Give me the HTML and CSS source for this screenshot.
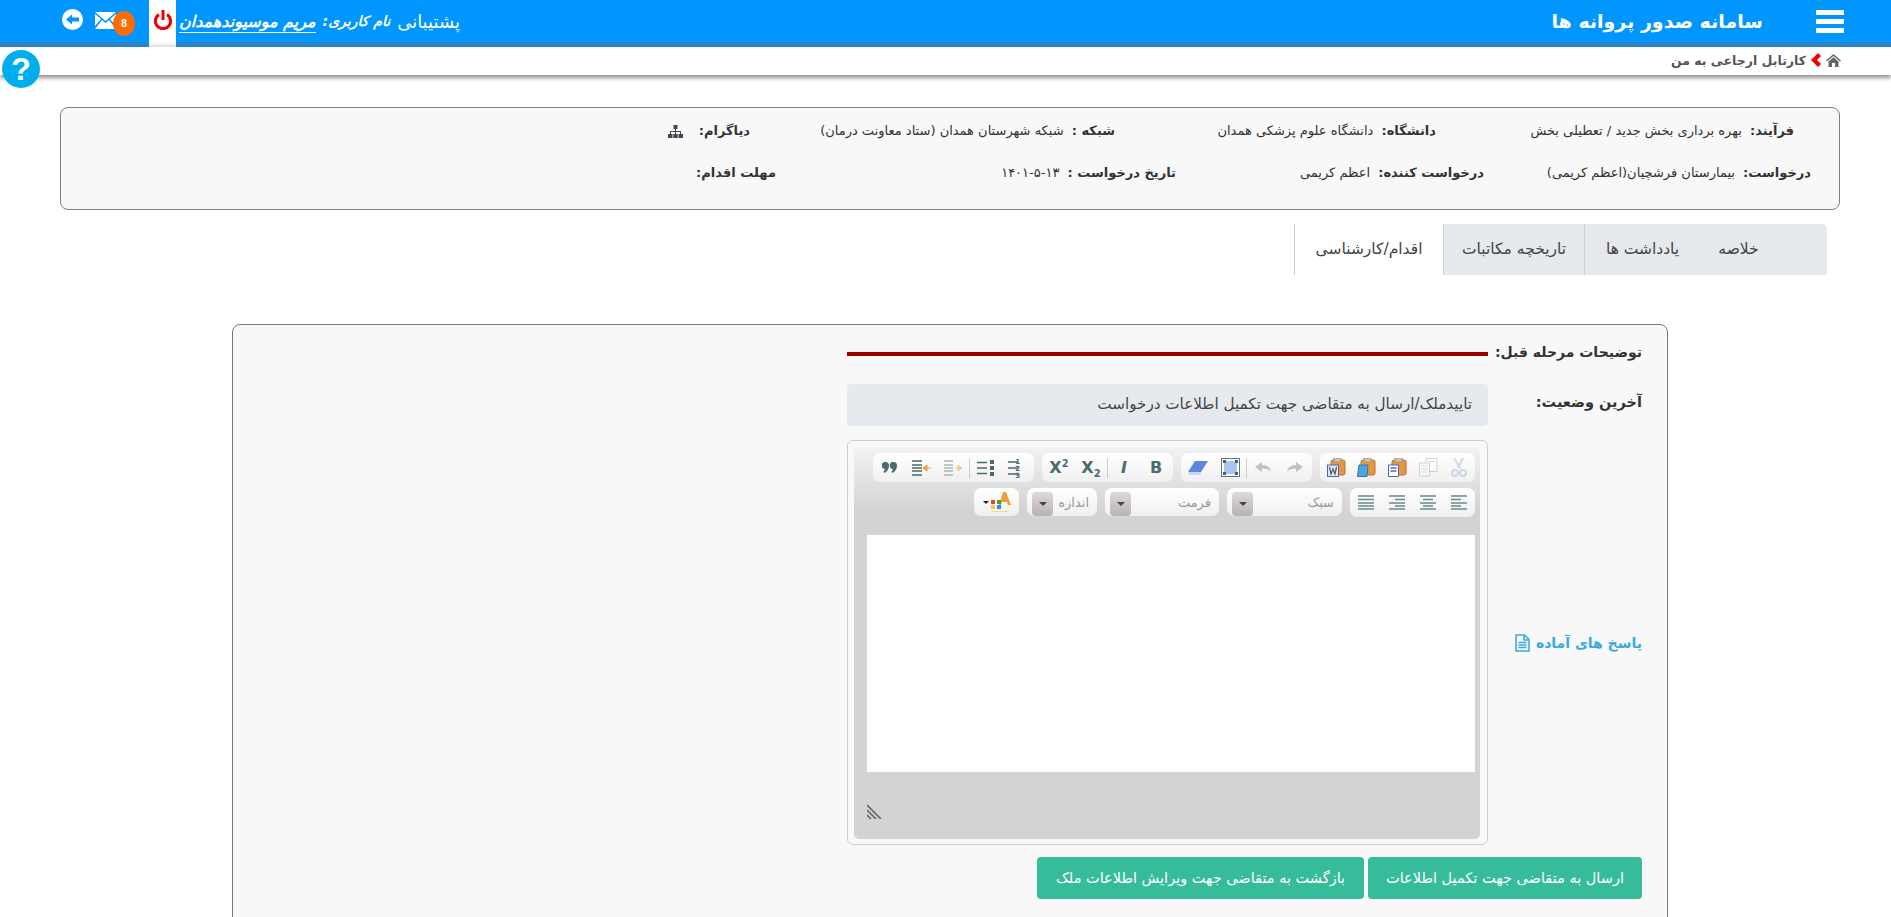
FILE: index.html
```html
<!DOCTYPE html>
<html lang="fa" dir="rtl">
<head>
  <meta charset="UTF-8" />
  <title>سامانه صدور پروانه ها</title>
  <link rel="stylesheet" href="styles.css">
</head>
<body>

  <header class="topbar">
    <div class="menu-btn"><span></span><span></span><span></span></div>
    <div class="app-title">سامانه صدور پروانه ها</div>
    <div class="user-area">
      <a class="support">پشتیبانی</a>
      <span class="user-label">نام کاربری:</span>
      <a class="user-name">مریم موسیوندهمدان</a>
      <div class="power-box">
        <svg width="18" height="20" viewBox="0 0 18 20"><path d="M5 4.600a7.600 7.600 0 1 0 8 0" fill="none" stroke="#f00000" stroke-width="3"/><rect x="7.500" y="0" width="3" height="10" fill="#f00000"/></svg>
      </div>
      <div class="mail">
        <svg width="21" height="17" viewBox="0 0 21 17"><path d="M0 0h21L10.500 9z" fill="#fff"/><path d="M0 2l6 5-6 7zM21 2l-6 5 6 7zM7 8l3.500 3L14 8l7 9H0z" fill="#fff"/></svg>
        <span class="badge">8</span>
      </div>
      <svg class="back-icon" width="21" height="21" viewBox="0 0 21 21"><circle cx="10.500" cy="10.500" r="10.500" fill="#fff"/><path d="M4 10.500l6-5v3h7v4h-7v3z" fill="#0096ff"/></svg>
    </div>
  </header>

  <nav class="crumbs">
    <svg width="15" height="13" viewBox="0 0 15 13"><path d="M7.500 0L15 6.500l-1 1-6.500-5.500L1 7.500l-1-1zM2.500 7.500l5-4.200 5 4.200V13H9V9H6v4H2.500z" fill="#666"/></svg>
    <svg width="10" height="14" viewBox="0 0 10 14"><path d="M7 0l3 3-4 4 4 4-3 3-7-7z" fill="#f00000"/></svg>
    <span>کارتابل ارجاعی به من</span>
  </nav>

  <div class="help-btn">?</div>

  <section class="info-box">
    <div class="info-row info-row-a">
      <div class="info-cell cell-a1"><b>فرآیند:</b> بهره برداری بخش جدید / تعطیلی بخش</div>
      <div class="info-cell cell-a2"><b>دانشگاه:</b> دانشگاه علوم پزشکی همدان</div>
      <div class="info-cell cell-a3"><b>شبکه :</b> شبکه شهرستان همدان (ستاد معاونت درمان)</div>
      <div class="info-cell"><b>دیاگرام:</b>
        <svg class="tree-icon" width="15" height="13" viewBox="0 0 15 13"><path d="M5.500 0h4v4h-4zM7 4h1v2h5v3h-1V7H8v2H7V7H3v2H2V6h5zM0 9h4.500v4H0zM5.300 9h4.400v4H5.300zM10.500 9H15v4h-4.500z" fill="#445"/></svg>
      </div>
    </div>
    <div class="info-row info-row-b">
      <div class="info-cell cell-b1"><b>درخواست:</b> بیمارستان فرشچیان(اعظم کریمی)</div>
      <div class="info-cell cell-b2"><b>درخواست کننده:</b> اعظم کریمی</div>
      <div class="info-cell cell-b3"><b>تاریخ درخواست :</b> <span class="req-date" dir="ltr">۱۴۰۱-۵-۱۳</span></div>
      <div class="info-cell"><b>مهلت اقدام:</b></div>
    </div>
  </section>

  <ul class="tabs">
    <li class="tab tab-summary">خلاصه</li>
    <li class="tab tab-notes">یادداشت ها</li>
    <li class="tab tab-letters">تاریخچه مکاتبات</li>
    <li class="tab tab-action active">اقدام/کارشناسی</li>
  </ul>

  <main class="panel">
    <div class="section-head">
      <h3>توضیحات مرحله قبل:</h3>
      <div class="red-line"></div>
    </div>

    <div class="form-grid">
      <label class="form-label status-label">آخرین وضعیت:</label>
      <div class="status-box">تاییدملک/ارسال به متقاضی جهت تکمیل اطلاعات درخواست</div>

      <a class="ready-link">پاسخ های آماده
        <svg width="15" height="18" viewBox="0 0 15 18"><path d="M1 1h8.500L14 5.500V17H1zM9 1v5h5M3.500 8.500h8M3.500 11h8M3.500 13.500h8" fill="none" stroke="#3aa9dd" stroke-width="1.500"/></svg>
      </a>

      <div class="editor">
        <div class="editor-inner">
          <div class="tool-row">
            <div class="tool-group g-clip">
              <span class="tool off"><svg width="18" height="20" viewBox="0 0 18 20"><path d="M13 0L8 10M4 0l6 10" stroke="#a9b8e0" stroke-width="2"/><circle cx="5" cy="15" r="3" fill="none" stroke="#a9b8e0" stroke-width="2"/><circle cx="13" cy="15" r="3" fill="none" stroke="#a9b8e0" stroke-width="2"/></svg></span>
              <span class="tool off"><svg width="19" height="19" viewBox="0 0 19 19"><path d="M7 .5h11v13H7z" fill="#fff" stroke="#aaa"/><path d="M.5 5h10v13H.5z" fill="#fff" stroke="#aaa"/><path d="M2.500 8h6M2.500 11h6M2.500 14h6M9 3.500h7" stroke="#bbb"/></svg></span>
              <span class="tool"><svg width="19" height="19" viewBox="0 0 19 19"><rect x="4" y="2" width="14" height="15" rx="2" fill="#e8973f" stroke="#b8722c"/><rect x="7" y="0" width="7" height="4" fill="#d9c19c" stroke="#998"/><path d="M.5 7h10v11.500H.5z" fill="#fff" stroke="#4a66c0"/><path d="M2.500 10h6M2.500 13h6" stroke="#4a66c0" stroke-width="1.500"/></svg></span>
              <span class="tool"><svg width="19" height="19" viewBox="0 0 19 19"><rect x="4" y="2" width="14" height="15" rx="2" fill="#e8973f" stroke="#b8722c"/><rect x="7" y="0" width="7" height="4" fill="#d9c19c" stroke="#998"/><path d="M2 7h9l-1 11.500H.5z" fill="#4aa6e0" stroke="#2a78b0"/></svg></span>
              <span class="tool"><svg width="19" height="19" viewBox="0 0 19 19"><rect x="4" y="2" width="14" height="15" rx="2" fill="#e8973f" stroke="#b8722c"/><rect x="7" y="0" width="7" height="4" fill="#d9c19c" stroke="#998"/><rect x=".5" y="7" width="11" height="11.500" fill="#dfe6f8" stroke="#4a66c0"/><path d="M2.500 9l1.500 7 2-5 2 5 1.500-7" fill="none" stroke="#555" stroke-width="1.200"/></svg></span>
            </div>
            <div class="tool-group g-view">
              <span class="tool off"><svg width="16" height="11" viewBox="0 0 16 11"><path d="M16 5L9 0v3C4 3 1 5 0 10c2-3 5-3.500 9-3.500V10z" fill="#7d9292"/></svg></span>
              <span class="tool off"><svg width="16" height="11" viewBox="0 0 16 11"><path d="M0 5l7-5v3c5 0 8 2 9 7-2-3-5-3.500-9-3.500V10z" fill="#7d9292"/></svg></span>
              <span class="tool-sep"></span>
              <span class="tool"><svg width="19" height="19" viewBox="0 0 19 19"><rect x=".5" y=".5" width="18" height="18" fill="#fff" stroke="#5a7a7a"/><rect x="3" y="3" width="13" height="13" fill="#a9c6f2"/><path d="M2 2h3v3H2zM14 2h3v3h-3zM2 14h3v3H2zM14 14h3v3h-3z" fill="#44686a"/></svg></span>
              <span class="tool"><svg width="20" height="14" viewBox="0 0 20 14"><path d="M7 0h13l-7 11H0z" fill="#5f86dc"/><path d="M0 11h13v3H1z" fill="#c8d6f4"/></svg></span>
            </div>
            <div class="tool-group g-fmt">
              <span class="tool fmt">B</span>
              <span class="tool fmt fmt-i">I</span>
              <span class="tool-sep"></span>
              <span class="tool fmt"><span>X<sub>2</sub></span></span>
              <span class="tool fmt"><span>X<sup>2</sup></span></span>
            </div>
            <div class="tool-group g-list">
              <span class="tool"><svg width="18" height="22" viewBox="0 0 18 22"><path d="M0 5h10M0 11h10M0 17h10" stroke="#4a6b6b" stroke-width="1.500"/><text x="12" y="7" class="list-num">1</text><text x="12" y="14" class="list-num">2</text><text x="12" y="21" class="list-num">3</text></svg></span>
              <span class="tool"><svg width="17" height="16" viewBox="0 0 17 16"><path d="M0 2.500h10M0 8h10M0 13.500h10" stroke="#4a6b6b" stroke-width="1.500"/><rect x="13" y="0" width="4" height="4" fill="#4a6b6b"/><rect x="13" y="6" width="4" height="4" fill="#4a6b6b"/><rect x="13" y="12" width="4" height="4" fill="#4a6b6b"/></svg></span>
              <span class="tool-sep"></span>
              <span class="tool off"><svg width="19" height="16" viewBox="0 0 19 16"><path d="M0 1h9M0 5h9M0 8h9M0 11h9M0 15h9" stroke="#5a7a7a" stroke-width="1.500"/><path d="M11 8h5M14 5l4 3-4 3z" stroke="#f0a030" fill="#f0a030"/></svg></span>
              <span class="tool"><svg width="19" height="16" viewBox="0 0 19 16"><path d="M0 1h10M0 5h10M0 8h10M0 11h10M0 15h10" stroke="#4a6b6b" stroke-width="1.500"/><path d="M14 8h5M15 5l-4 3 4 3z" stroke="#f0a030" fill="#f0a030"/></svg></span>
              <span class="tool"><svg width="15" height="11" viewBox="0 0 15 11"><path d="M3.500 0a3.500 3.500 0 0 1 3.500 3.500C7 7 5 10 2 11L1.500 9.800 3 7A3.500 3.500 0 0 1 3.500 0zM11.500 0A3.500 3.500 0 0 1 15 3.500C15 7 13 10 10 11L9.500 9.800 11 7a3.500 3.500 0 0 1 .5-7z" fill="#4a6b6b"/></svg></span>
            </div>
          </div>

          <div class="tool-row">
            <div class="tool-group g-align">
              <span class="tool"><svg width="16" height="15" viewBox="0 0 16 15"><path d="M0 1h16M0 4.500h10M0 8h16M0 11h10M0 14h16" stroke="#6a8c8c" stroke-width="1.500"/></svg></span>
              <span class="tool"><svg width="16" height="15" viewBox="0 0 16 15"><path d="M0 1h16M3 4.500h10M0 8h16M3 11h10M0 14h16" stroke="#6a8c8c" stroke-width="1.500"/></svg></span>
              <span class="tool"><svg width="16" height="15" viewBox="0 0 16 15"><path d="M0 1h16M6 4.500h10M0 8h16M6 11h10M0 14h16" stroke="#6a8c8c" stroke-width="1.500"/></svg></span>
              <span class="tool"><svg width="16" height="15" viewBox="0 0 16 15"><path d="M0 1h16M0 4.500h16M0 8h16M0 11h16M0 14h16" stroke="#6a8c8c" stroke-width="1.500"/></svg></span>
            </div>
            <div class="combo combo-style"><span class="combo-text">سبک</span><span class="combo-arrow"></span></div>
            <div class="combo combo-format"><span class="combo-text">فرمت</span><span class="combo-arrow"></span></div>
            <div class="combo combo-size"><span class="combo-text">اندازه</span><span class="combo-arrow"></span></div>
            <div class="tool-group color-group">
              <svg width="20" height="21" viewBox="0 0 20 21"><path d="M8 13L12 0h3l5 13h-3l-1-3h-5l-1 3z" fill="#f0a030"/><rect x="0" y="8" width="4" height="4" fill="#e04040"/><rect x="6" y="8" width="4" height="4" fill="#40a040"/><rect x="0" y="13" width="4" height="4" fill="#f0d040"/><rect x="6" y="13" width="4" height="4" fill="#4080e0"/><rect x="0" y="19" width="18" height="1" fill="#f0e080"/></svg>
              <span class="color-caret"></span>
            </div>
          </div>

          <div class="edit-area"></div>

          <div class="editor-foot">
            <svg width="15" height="16" viewBox="0 0 15 16"><path d="M0 2l14 14M0 7l9 9M0 12l4 4" stroke="#666" stroke-width="1.600"/></svg>
          </div>
        </div>
      </div>
    </div>

    <div class="actions">
      <button class="btn btn-send">ارسال به متقاضی جهت تکمیل اطلاعات</button>
      <button class="btn btn-back">بازگشت به متقاضی جهت ویرایش اطلاعات ملک</button>
    </div>
  </main>

</body>
</html>
```

FILE: styles.css
```css
* { margin: 0; padding: 0; box-sizing: border-box; }

html, body {
  height: 100vh;
  overflow: hidden;
}

body {
  font-family: "DejaVu Sans", "Noto Sans", sans-serif;
  background: #fff;
  color: #333;
  font-size: 11px;
  position: relative;
}

/* top bar */
.topbar {
  display: flex;
  align-items: center;
  height: 47px;
  background: #0096ff;
  border-bottom: 5px solid #2a86c8;
  padding: 0 47px 0 62px;
  color: #fff;
}

.menu-btn {
  display: flex;
  flex-direction: column;
  gap: 4px;
  width: 28px;
  margin-left: 53px;
}

.menu-btn span {
  height: 5px;
  background: #fff;
}

.app-title {
  font-size: 19px;
  font-weight: bold;
  white-space: nowrap;
}

.user-area {
  display: flex;
  align-items: center;
  margin-right: auto;
  height: 42px;
}

.support {
  font-size: 18px;
  margin-left: 7px;
  white-space: nowrap;
}

.user-label {
  font-size: 14px;
  font-weight: bold;
  font-style: italic;
  margin-left: 7px;
  white-space: nowrap;
}

.user-name {
  font-size: 16px;
  font-weight: bold;
  font-style: italic;
  border-bottom: 1px solid #fff;
  white-space: nowrap;
  line-height: 20px;
  margin-top: 2px;
}

.power-box {
  display: flex;
  justify-content: center;
  align-self: flex-start;
  width: 27px;
  height: 47px;
  padding-top: 10px;
  margin-right: 3px;
  background: linear-gradient(#fff 90%, #ddd);
}

.mail {
  position: relative;
  width: 21px;
  height: 17px;
  margin: 0 33px 2px 0;
}

.mail svg { display: block; }

.badge {
  position: absolute;
  left: 18px;
  top: -1px;
  width: 22px;
  height: 25px;
  border-radius: 50%;
  background: #ff6c00;
  color: #fff;
  font: bold 12px/25px "Liberation Serif", serif;
  text-align: center;
}

.back-icon {
  margin: 0 12px 4px 0;
}

/* breadcrumb */
.crumbs {
  display: flex;
  align-items: center;
  gap: 5px;
  height: 28px;
  padding: 0 50px 2px 0;
  background: #fff;
  box-shadow: 0 3px 4px rgba(60, 60, 60, 0.55);
  color: #555;
  font-size: 12.500px;
  font-weight: bold;
}

.help-btn {
  position: absolute;
  left: 2px;
  top: 50px;
  width: 38px;
  height: 38px;
  border-radius: 50%;
  background: #00aeef;
  color: #fff;
  font: bold 32px/38px "Liberation Sans", sans-serif;
  text-align: center;
}

/* info box */
.info-box {
  height: 103px;
  margin: 32px 51px 0 60px;
  background: #f8f8f8;
  border: 1px solid #808080;
  border-radius: 8px;
  font-size: 13px;
  color: #333;
}

.info-row {
  display: flex;
  align-items: center;
}

.info-row b { margin-left: 4px; }

.info-row-a {
  padding: 7px 45px 0 0;
  height: 37px;
}

.info-row-b {
  padding: 12px 28px 0 0;
  height: 43px;
}

.info-cell { white-space: nowrap; }

.cell-a1 { width: 358px; }
.cell-a2 { width: 321px; }
.cell-a3 { width: 365px; }
.cell-b1 { width: 327px; }
.cell-b2 { width: 308px; }
.cell-b3 { width: 400px; }

.req-date { letter-spacing: 2px; }

.tree-icon {
  vertical-align: middle;
  margin-right: 8px;
}

/* tabs */
.tabs {
  display: flex;
  list-style: none;
  height: 51px;
  margin: 14px 64px 0 0;
  font-size: 15.500px;
  color: #444;
}

.tab {
  display: flex;
  align-items: center;
  justify-content: center;
  padding-bottom: 2px;
  background: #e6e9ed;
  border-left: 1px solid #ccd0d6;
  white-space: nowrap;
}

.tab-summary {
  width: 127px;
  padding-right: 50px;
  border-left: 0;
  border-radius: 0 5px 0 0;
}

.tab-notes { width: 116px; }
.tab-letters { width: 141px; }
.tab-action { width: 149px; }

.tab.active {
  background: #fff;
}

/* main panel */
.panel {
  height: 700px;
  margin: 49px 223px 0 232px;
  padding: 14px 25px 0 0;
  background: #f8f8f8;
  border: 1px solid #777;
  border-radius: 8px;
  font-size: 12px;
}

.section-head {
  display: flex;
  align-items: center;
  width: 795px;
  height: 30px;
}

.section-head h3 {
  width: 154px;
  padding-bottom: 4px;
  font-size: 14px;
  color: #333;
  white-space: nowrap;
}

.red-line {
  flex: 1;
  height: 4px;
  background: #990000;
}

.form-grid {
  display: grid;
  grid-template-columns: 154px 641px;
  row-gap: 14px;
  margin-top: 15px;
}

.form-label {
  font-size: 14.500px;
  font-weight: bold;
  color: #333;
  padding-top: 10px;
  white-space: nowrap;
}

.status-box {
  display: flex;
  align-items: center;
  height: 42px;
  padding: 0 16px 3px;
  background: #e6e9ed;
  border-radius: 4px;
  color: #444;
  font-size: 15.200px;
  white-space: nowrap;
}

.ready-link {
  display: flex;
  align-items: center;
  gap: 6px;
  align-self: center;
  font-size: 14px;
  font-weight: bold;
  color: #3aa9dd;
  white-space: nowrap;
}

/* editor */
.editor {
  height: 405px;
  padding: 6px 7px 5px 6px;
  border: 1px solid #ccc;
  border-radius: 6px;
  background: #f8f8f8;
}

.editor-inner {
  height: 100%;
  padding: 6px 5px 0 13px;
  border-radius: 5px;
  background: linear-gradient(#f2f2f2, #d3d3d3 65px);
}

.tool-row {
  display: flex;
  gap: 8px;
  margin-bottom: 6px;
}

.tool-group {
  display: flex;
  align-items: center;
  height: 29px;
  padding: 0 1px;
  background: linear-gradient(#fff, #f0f0f0);
  border-radius: 7px;
  color: #4a6b6b;
}

.g-clip { width: 155px; }
.g-view { width: 131px; }
.g-fmt { width: 131px; }
.g-list { width: 161px; }
.g-align { width: 125px; }

.tool {
  display: flex;
  flex: 1;
  align-items: center;
  justify-content: center;
  height: 29px;
}

.tool.off { opacity: 0.5; }

.tool-sep {
  flex: none;
  width: 1px;
  height: 20px;
  background: #ccc;
}

.fmt {
  font-size: 16px;
  font-weight: bold;
  direction: ltr;
}

.fmt-i { font-style: italic; }

.fmt sub, .fmt sup {
  font-size: 10px;
  line-height: 0;
}

.list-num {
  font: bold 7px "DejaVu Sans", sans-serif;
  fill: #4a6b6b;
}

.combo {
  display: flex;
  align-items: center;
  justify-content: space-between;
  height: 28px;
  padding: 0 8px 0 5px;
  background: linear-gradient(#fff, #f0f0f0);
  border-radius: 7px;
  color: #999;
  font-size: 13px;
}

.combo-style { width: 115px; }
.combo-format { width: 114px; }
.combo-size { width: 70px; }

.combo-arrow {
  display: flex;
  align-items: center;
  justify-content: center;
  width: 21px;
  height: 24px;
  margin-top: 4px;
  background: linear-gradient(#dfd8d8, #b9b2b2);
  border-radius: 4px;
}

.combo-arrow::after {
  content: "";
  border: 4px solid transparent;
  border-top: 4px solid #444;
  margin-top: 4px;
}

.color-group {
  justify-content: center;
  gap: 2px;
  width: 45px;
  height: 28px;
}

.color-caret {
  border: 3px solid transparent;
  border-top: 3px solid #222;
  margin-top: 3px;
}

.edit-area {
  height: 237px;
  margin-top: 18px;
  background: #fff;
}

.editor-foot {
  display: flex;
  justify-content: flex-end;
  padding-top: 31px;
}

/* buttons */
.actions {
  display: flex;
  gap: 4px;
  margin-top: 12px;
}

.btn {
  height: 42px;
  border: none;
  border-radius: 4px;
  background: #37bc9b;
  color: #fff;
  font-family: inherit;
  font-size: 14.500px;
  white-space: nowrap;
}

.btn-send { width: 274px; }
.btn-back { width: 327px; }
```
